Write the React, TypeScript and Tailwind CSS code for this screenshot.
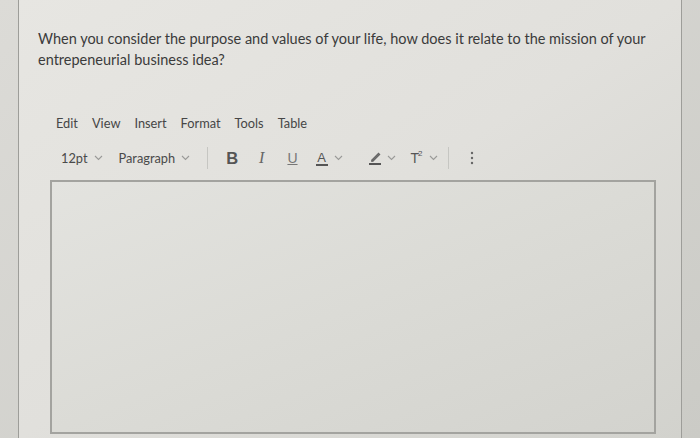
import React from "react";

const Chev = () => (
  <svg width="9" height="6" viewBox="0 0 9 6" className="ml-[6px]" fill="none" stroke="#9a9a98" strokeWidth="1.1">
    <path d="M1 1 L4.5 4.5 L8 1" />
  </svg>
);

export default function App() {
  return (
    <div
      className="w-[700px] h-[438px] overflow-hidden bg-gradient-to-br from-[#dcdbd7] to-[#cbcbc6] flex"
      style={{ fontFamily: "Lato, 'Open Sans', sans-serif" }}
    >
      <div className="ml-[18px] w-[664px] h-full border-l border-r border-[#9d9d99] bg-gradient-to-br from-[#e7e6e2] via-[#e1e0dc] to-[#d2d2cd] flex flex-col">
        <div className="pt-[28px] pl-[19px] w-[634px] text-[14.5px] leading-[21px] text-[#3b3b3b]">
          When you consider the purpose and values of your life, how does it relate to the mission of your
          entrepeneurial business idea?
        </div>

        <div className="mt-[44px] pl-[37px] flex gap-[14px] text-[12.8px] text-[#464646]">
          <span>Edit</span>
          <span>View</span>
          <span>Insert</span>
          <span>Format</span>
          <span>Tools</span>
          <span>Table</span>
        </div>

        <div className="mt-[13px] pl-[42px] h-[24px] flex items-center text-[12.8px] text-[#4a4a4a]">
          <span>12pt</span>
          <Chev />
          <span className="ml-[16px]">Paragraph</span>
          <Chev />
          <div className="ml-[17px] w-px h-[22px] bg-[#c6c6c2]" />
          <span className="ml-[18px] text-[16.5px] font-bold text-[#555]" style={{ fontFamily: "'Liberation Sans', sans-serif" }}>B</span>
          <span className="ml-[21px] text-[16px] italic text-[#666]" style={{ fontFamily: "'Liberation Serif', serif" }}>I</span>
          <span className="ml-[23px] text-[14px] underline text-[#777]" style={{ fontFamily: "'Liberation Sans', sans-serif" }}>U</span>
          <span className="ml-[18px] flex items-center">
            <span className="flex flex-col items-center">
              <span className="text-[13px] leading-[13px] text-[#555]" style={{ fontFamily: "'Liberation Sans', sans-serif" }}>A</span>
              <span className="w-[12px] h-[2px] bg-[#555]" />
            </span>
            <Chev />
          </span>
          <span className="ml-[26px] flex items-center">
            <span className="flex flex-col items-center">
              <svg width="12" height="11" viewBox="0 0 12 11" fill="none" stroke="#666" strokeWidth="1.4">
                <path d="M3 9 L9.5 2.5 L10.5 3.5 L4 10 Z" />
                <path d="M2 10 L4 10" />
              </svg>
              <span className="w-[12px] h-[2px] bg-[#555] mt-[1px]" />
            </span>
            <Chev />
          </span>
          <span className="ml-[15px] flex items-center text-[14px] text-[#555]" style={{ fontFamily: "'Liberation Sans', sans-serif" }}>
            T<sup className="text-[8px] -ml-[1px]">2</sup>
            <Chev />
          </span>
          <div className="ml-[10px] w-px h-[22px] bg-[#c6c6c2]" />
          <svg width="4" height="14" viewBox="0 0 4 14" className="ml-[21px]" fill="#666">
            <circle cx="2" cy="2" r="1.2" />
            <circle cx="2" cy="7" r="1.2" />
            <circle cx="2" cy="12" r="1.2" />
          </svg>
        </div>

        <div className="mt-[10px] ml-[31px] w-[606px] h-[254px] border-2 border-[#a3a39f] bg-gradient-to-br from-[#e3e3df] via-[#dbdbd6] to-[#d3d3ce]" />
      </div>
    </div>
  );
}
